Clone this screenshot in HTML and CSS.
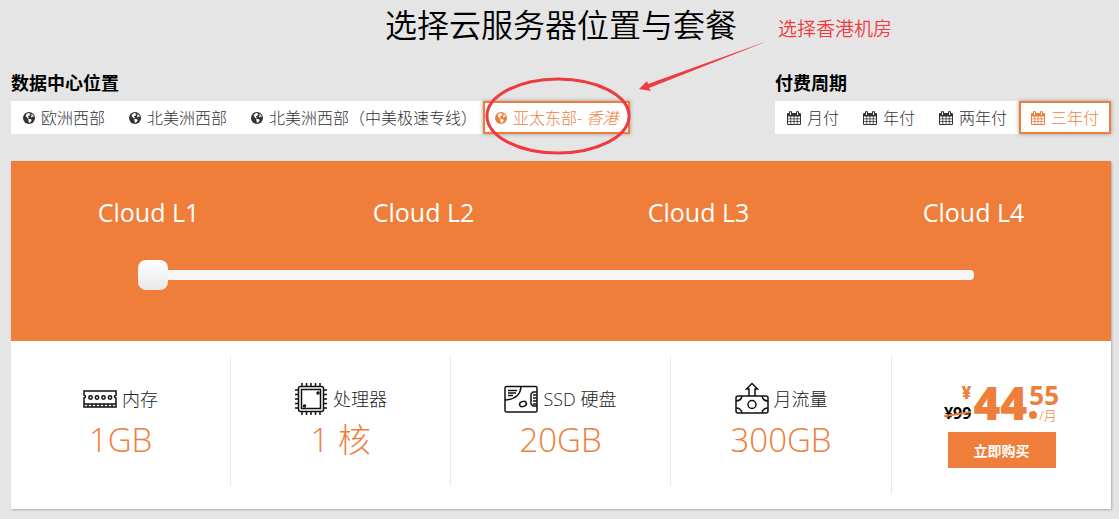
FILE: index.html
```html
<!DOCTYPE html>
<html lang="zh-CN">
<head>
<meta charset="utf-8">
<meta name="viewport" content="width=device-width, initial-scale=1">
<title>选择云服务器位置与套餐</title>
<link rel="stylesheet" href="styles.css">
</head>
<body>
<svg class="sprite" aria-hidden="true">
  <symbol id="globe" viewBox="0 0 12 12">
    <circle cx="6" cy="6" r="6" fill="currentColor"/>
    <path fill="#fff" d="M5.400 .9 7.200 1.400 6.200 2.300 7.400 2.600 6.800 3.600 5.400 4 4.800 5.200 5.800 5.600 6.200 6.600 4.600 6.200 3.200 4.800 2.600 3.400 3.600 2ZM8.200 1.600 10.200 3.200 10.800 5 9.400 4.600 8.600 5.400 7.800 4.400 8.800 3.200ZM5.600 7 7.400 7 8.800 8 8 9.400 6.600 10.800 5.600 10.600 5.800 9 5 8Z"/>
  </symbol>
  <symbol id="calendar" viewBox="0 0 14 14">
    <path fill="currentColor" fill-rule="evenodd" d="M0 3Q0 2 1 2H2V1.200Q2 0 3.500 0T5 1.200V2H9V1.200Q9 0 10.500 0T12 1.200V2H13Q14 2 14 3V13Q14 14 13 14H1Q0 14 0 13ZM3 1.200V4H4V1.200ZM10 1.200V4H11V1.200ZM1 5.500V7.500H3.400V5.500ZM4.200 5.500V7.500H6.600V5.500ZM7.400 5.500V7.500H9.800V5.500ZM10.600 5.500V7.500H13V5.500ZM1 8.300V10.300H3.400V8.300ZM4.200 8.300V10.300H6.600V8.300ZM7.400 8.300V10.300H9.800V8.300ZM10.600 8.300V10.300H13V8.300ZM1 11.100V13H3.400V11.100ZM4.200 11.100V13H6.600V11.100ZM7.400 11.100V13H9.800V11.100ZM10.600 11.100V13H13V11.100Z"/>
  </symbol>
</svg>

<main class="page">
  <h1 class="title">选择云服务器位置与套餐</h1>

  <div class="options">
    <section>
      <h2 class="label">数据中心位置</h2>
      <div class="tabs">
        <button class="tab" type="button"><svg class="globe"><use href="#globe"/></svg>欧洲西部</button>
        <button class="tab" type="button"><svg class="globe"><use href="#globe"/></svg>北美洲西部</button>
        <button class="tab bracketed" type="button"><svg class="globe"><use href="#globe"/></svg>北美洲西部（中美极速专线）</button>
        <div class="marked">
          <button class="tab active" type="button" aria-pressed="true"><svg class="globe"><use href="#globe"/></svg><span>亚太东部- <em>香港</em></span></button>
          <svg class="note-mark" viewBox="0 0 290 120" fill="none" aria-hidden="true">
            <ellipse cx="75" cy="78" rx="71" ry="37" stroke="#ef3b40" stroke-width="3"/>
            <path fill="#ef3b40" d="M282 4 166 50 168 53 156 51 164 43 165 46Z"/>
          </svg>
          <p class="note">选择香港机房</p>
        </div>
      </div>
    </section>
    <section>
      <h2 class="label">付费周期</h2>
      <div class="tabs">
        <button class="tab" type="button"><svg class="cal"><use href="#calendar"/></svg>月付</button>
        <button class="tab" type="button"><svg class="cal"><use href="#calendar"/></svg>年付</button>
        <button class="tab" type="button"><svg class="cal"><use href="#calendar"/></svg>两年付</button>
        <button class="tab active" type="button" aria-pressed="true"><svg class="cal"><use href="#calendar"/></svg>三年付</button>
      </div>
    </section>
  </div>

  <div class="panel">
    <div class="plans">
      <div class="names"><span>Cloud L1</span><span>Cloud L2</span><span>Cloud L3</span><span>Cloud L4</span></div>
      <input class="slider" type="range" min="1" max="4" value="1" aria-label="套餐">
    </div>
    <div class="specs">
      <div class="spec">
        <div class="spec-name">
          <svg class="icon" viewBox="0 0 34 34"><path d="M1 9H33V13Q30 14.500 33 16V25H1V16Q4 14.500 1 13ZM1 22H33M5 22V25M9 22V25M13 22V25M17 22V25M21 22V25M25 22V25M29 22V25"/><circle cx="7.500" cy="15.500" r="1.700"/><circle cx="14" cy="15.500" r="1.700"/><circle cx="20.500" cy="15.500" r="1.700"/><circle cx="27" cy="15.500" r="1.700"/></svg>
          内存
        </div>
        <div class="value">1GB</div>
      </div>
      <div class="spec">
        <div class="spec-name">
          <svg class="icon" viewBox="0 0 34 34"><rect x="4.500" y="4.500" width="25" height="25" rx="2"/><rect x="7.500" y="7.500" width="19" height="19"/><path d="M8 1V4M12.500 1V4M17 1V4M21.500 1V4M26 1V4M8 30V33M12.500 30V33M17 30V33M21.500 30V33M26 30V33M1 8H4M1 12.500H4M1 17H4M1 21.500H4M1 26H4M30 8H33M30 12.500H33M30 17H33M30 21.500H33M30 26H33"/><circle cx="24" cy="11" r="1"/><circle cx="10.500" cy="24" r="1"/></svg>
          处理器
        </div>
        <div class="value">1 核</div>
      </div>
      <div class="spec">
        <div class="spec-name">
          <svg class="icon" viewBox="0 0 34 34"><rect x="1" y="4.500" width="32" height="25.500" rx="1.500"/><path d="M17 5Q16 17 1 18M4 8.500H13M4 11H12M4 13.500H9M33 10H29L27 12V22L29 24H33M29 13H33M29 16H33M29 19H33M29 22H33"/><ellipse cx="19" cy="22" rx="3.500" ry="2.500" transform="rotate(-20 19 22)"/></svg>
          SSD 硬盘
        </div>
        <div class="value">20GB</div>
      </div>
      <div class="spec">
        <div class="spec-name">
          <svg class="icon" viewBox="0 0 34 34"><path d="M14 14V7H11.500L17 1.500 22.500 7H20V14"/><rect x="1" y="14" width="32" height="17" rx="2"/><circle cx="17" cy="22.500" r="4"/><path d="M7 14Q6 19 1 19M27 14Q28 19 33 19M7 31Q6 26 1 26M27 31Q28 26 33 26"/></svg>
          月流量
        </div>
        <div class="value">300GB</div>
      </div>
      <div class="buy">
        <div class="price">
          <div class="side"><span class="yen">¥</span><span class="old">¥99</span></div>
          <span class="whole">44</span>
          <div class="side cents"><span class="fraction">55</span><span class="per"><i class="dot"></i>/月</span></div>
        </div>
        <button class="order" type="button">立即购买</button>
      </div>
    </div>
  </div>
</main>
</body>
</html>
```
FILE: styles.css
```css
* { box-sizing: border-box; }
body {
  margin: 0;
  background: #e5e5e5;
  color: #000;
  font-family: "Open Sans", "Noto Sans CJK SC", sans-serif;
}
button { font: inherit; }
h1, h2, p { margin: 0; }
.sprite { position: absolute; width: 0; height: 0; }
.page { padding: 0 8px 10px 11px; }
.title {
  height: 71px;
  font-size: 32px;
  font-weight: 350;
  line-height: 49px;
  text-align: center;
}
.options { display: flex; justify-content: space-between; }
.label { margin-bottom: 6px; font-size: 18px; line-height: 24px; }
.tabs { display: flex; }
.tab {
  display: flex;
  align-items: center;
  gap: 6px;
  height: 33px;
  padding: 0 12px;
  border: 0;
  background: #fff;
  color: #333;
  font-size: 16px;
  font-weight: 300;
  line-height: 24px;
  white-space: nowrap;
  cursor: pointer;
}
.tab.bracketed { padding-right: 6px; }
.tab.active {
  padding: 0 10px;
  border: 2px solid #ee7e3a;
  color: #ee7e3a;
  box-shadow: 0 0 4px #999;
}
.globe { width: 12px; height: 12px; }
.cal { width: 14px; height: 14px; }
.marked { position: relative; }
.note-mark {
  position: absolute;
  left: 0;
  top: -63px;
  width: 290px;
  height: 120px;
  pointer-events: none;
}
.note {
  position: absolute;
  left: 295px;
  top: -86px;
  color: #ef3b40;
  font-size: 19px;
  font-weight: 350;
  line-height: 28px;
  white-space: nowrap;
}
.panel {
  margin-top: 27px;
  background: #fff;
  box-shadow: 1px 1px 2px #aaa;
}
.plans { padding: 31px 0 51px; background: #ee7e3a; }
.names {
  display: grid;
  grid-template-columns: repeat(4, 1fr);
  margin-bottom: 28px;
  color: #fff;
  font-size: 25px;
  font-weight: 500;
  line-height: 40px;
  text-align: center;
}
.slider {
  display: block;
  width: 76%;
  height: 30px;
  margin: 0 auto 0 127px;
  background: none;
  appearance: none;
}
.slider::-webkit-slider-runnable-track {
  height: 10px;
  border-radius: 4px;
  background: #f6f6f6;
}
.slider::-webkit-slider-thumb {
  width: 30px;
  height: 30px;
  margin-top: -10px;
  border-radius: 8px;
  background: linear-gradient(#fff, #e8e8e8);
  appearance: none;
}
.specs {
  display: grid;
  grid-template-columns: repeat(5, 1fr);
  align-items: start;
  padding: 15px 0;
}
.spec {
  padding: 26px 0 24px;
  border-right: 1px solid #e8e8e8;
  text-align: center;
}
.spec:nth-child(4) { border: 0; }
.spec-name {
  display: flex;
  align-items: center;
  justify-content: center;
  gap: 5px;
  margin-bottom: 2px;
  color: #222;
  font-size: 18px;
  font-weight: 300;
  line-height: 34px;
}
.icon { width: 34px; height: 34px; fill: none; stroke: #111; stroke-width: 1.5; }
.value { color: #ee7e3a; font-size: 33px; font-weight: 300; line-height: 44px; }
.buy {
  display: flex;
  flex-direction: column;
  align-items: center;
  padding: 28px 0 26px;
  border-left: 1px solid #e8e8e8;
}
.price {
  display: flex;
  gap: 2px;
  height: 48px;
  color: #ee7e3a;
  font-weight: 800;
}
.side { display: flex; flex-direction: column; align-items: flex-end; }
.yen { font-size: 17px; line-height: 18px; }
.old {
  position: relative;
  color: #000;
  font-size: 16px;
  font-weight: 700;
  line-height: 22px;
}
.old::after {
  content: "";
  position: absolute;
  left: 0;
  right: 0;
  top: 11px;
  height: 2px;
  background: #ee7e3a;
  transform: rotate(-9deg);
}
.whole { font-size: 46px; line-height: 36px; }
.cents { align-items: flex-start; }
.fraction { font-size: 26px; font-weight: 700; line-height: 22px; }
.per {
  display: flex;
  align-items: center;
  gap: 2px;
  font-size: 13px;
  font-weight: 300;
  line-height: 18px;
}
.dot { width: 8px; height: 8px; border-radius: 50%; background: #ee7e3a; }
.order {
  width: 108px;
  height: 36px;
  border: 0;
  background: #ee7e3a;
  color: #fff;
  font-size: 14px;
  font-weight: 700;
  cursor: pointer;
}
```
